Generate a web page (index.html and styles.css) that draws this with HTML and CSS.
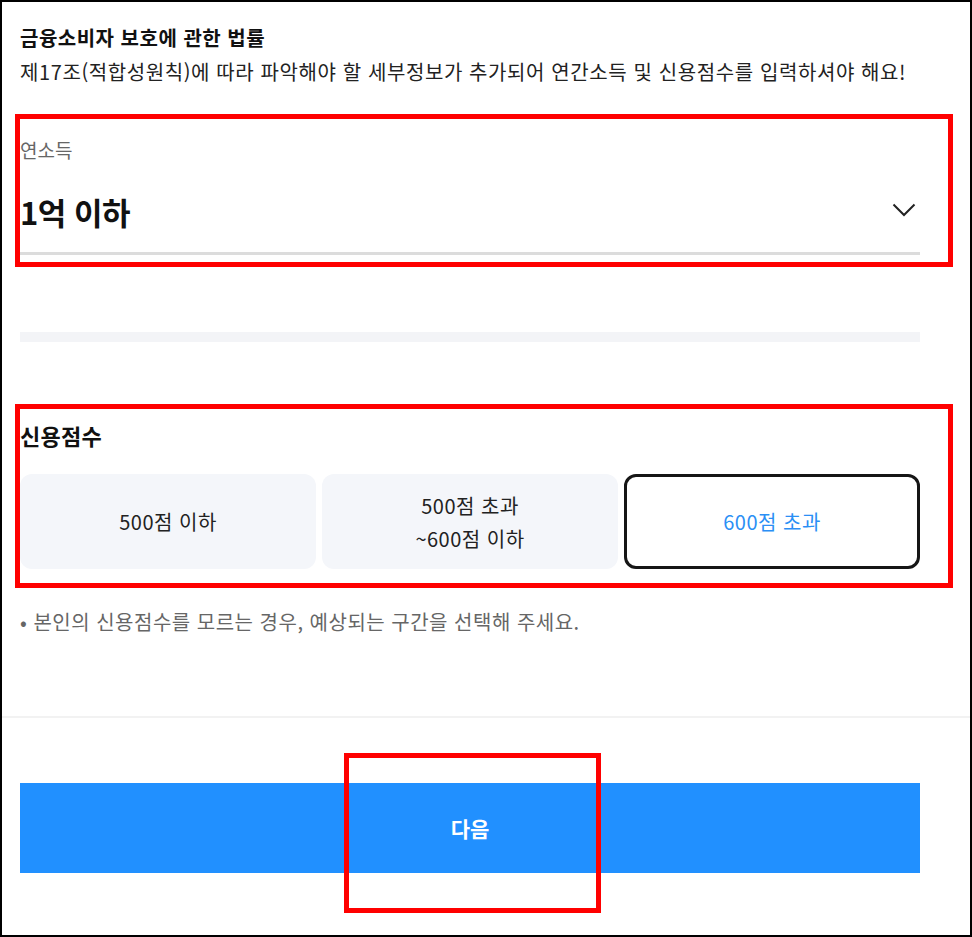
FILE: index.html
```html
<!DOCTYPE html>
<html lang="ko">
<head>
<meta charset="utf-8">
<title>신용정보 입력</title>
<link rel="stylesheet" href="styles.css">
</head>
<body>
<div class="frame">
  <div class="content">
    <h1 class="law-title">금융소비자 보호에 관한 법률</h1>
    <p class="law-desc">제17조(적합성원칙)에 따라 파악해야 할 세부정보가 추가되어 연간소득 및 신용점수를 입력하셔야 해요!</p>

    <div class="field">
      <div class="field-label">연소득</div>
      <div class="select-row">
        <span class="select-value">1억 이하</span>
        <svg class="chevron" width="24" height="14" viewBox="0 0 24 14"><polyline points="1.5,1.5 12,12 22.5,1.5" fill="none" stroke="#222" stroke-width="2"/></svg>
      </div>
    </div>

    <div class="gray-bar"></div>

    <h2 class="section-title">신용점수</h2>
    <div class="options">
      <div class="option">500점 이하</div>
      <div class="option">500점 초과<br>~600점 이하</div>
      <div class="option selected">600점 초과</div>
    </div>
    <p class="note">• 본인의 신용점수를 모르는 경우, 예상되는 구간을 선택해 주세요.</p>
  </div>
  <div class="divider"></div>
  <div class="content">
    <button class="next-btn">다음</button>
  </div>

  <div class="mark mark-income"></div>
  <div class="mark mark-score"></div>
  <div class="mark mark-next"></div>
</div>
</body>
</html>
```

FILE: styles.css
```css
* { box-sizing: border-box; }
html, body { margin: 0; padding: 0; background: #fff; }
body {
  font-family: "Noto Sans CJK KR", "Noto Sans", sans-serif;
  color: #222;
}
.frame {
  position: relative;
  width: 972px;
  height: 937px;
  border: 2px solid #000;
  overflow: hidden;
}
.content {
  padding: 0 50px 0 18px;
}
.law-title {
  margin: 22px 0 0;
  font-size: 20px;
  line-height: 28px;
  font-weight: 700;
  color: #111;
  letter-spacing: 0.5px;
}
.law-desc {
  margin: 6px 0 0;
  font-size: 20px;
  line-height: 28px;
  font-weight: 400;
  color: #222;
  letter-spacing: 0.6px;
  white-space: nowrap;
}
.field { margin-top: 51px; }
.field-label {
  font-size: 19px;
  line-height: 26px;
  color: #666;
}
.select-row {
  margin-top: 29px;
  display: flex;
  align-items: center;
  justify-content: space-between;
  padding-right: 4px;
  padding-bottom: 20px;
  border-bottom: 3px solid #dcdcdc;
}
.select-value {
  font-size: 31px;
  line-height: 40px;
  font-weight: 700;
  color: #111;
  letter-spacing: -0.5px;
}
.chevron { display: block; margin-top: -4px; }
.gray-bar {
  margin-top: 77px;
  height: 10px;
  background: #f3f4f7;
}
.section-title {
  margin: 79px 0 0;
  font-size: 22px;
  line-height: 28px;
  font-weight: 700;
  color: #111;
  letter-spacing: 0.3px;
}
.options {
  margin-top: 25px;
  display: grid;
  grid-template-columns: repeat(3, 1fr);
  gap: 6px;
}
.option {
  height: 95px;
  border-radius: 12px;
  background: #f4f6fa;
  display: flex;
  align-items: center;
  justify-content: center;
  text-align: center;
  font-size: 20px;
  line-height: 33px;
  color: #222;
  letter-spacing: 0.5px;
}
.option.selected {
  background: #fff;
  border: 3px solid #161616;
  color: #2b8ff5;
}
.note {
  margin: 39px 0 0;
  font-size: 20px;
  line-height: 28px;
  color: #666;
  letter-spacing: 0.5px;
}
.divider {
  margin-top: 80px;
  height: 2px;
  background: #f2f2f2;
}
.next-btn {
  display: block;
  width: 100%;
  margin-top: 65px;
  height: 90px;
  border: 0;
  background: #2190ff;
  color: #fff;
  font-family: "Noto Sans CJK KR", "Noto Sans", sans-serif;
  font-size: 21px;
  font-weight: 700;
}
.mark {
  position: absolute;
  border: 5px solid #ff0000;
}
.mark-income { left: 13px; top: 112px; width: 938px; height: 153px; }
.mark-score { left: 13px; top: 402px; width: 938px; height: 184px; }
.mark-next { left: 342px; top: 751px; width: 257px; height: 160px; }
```
